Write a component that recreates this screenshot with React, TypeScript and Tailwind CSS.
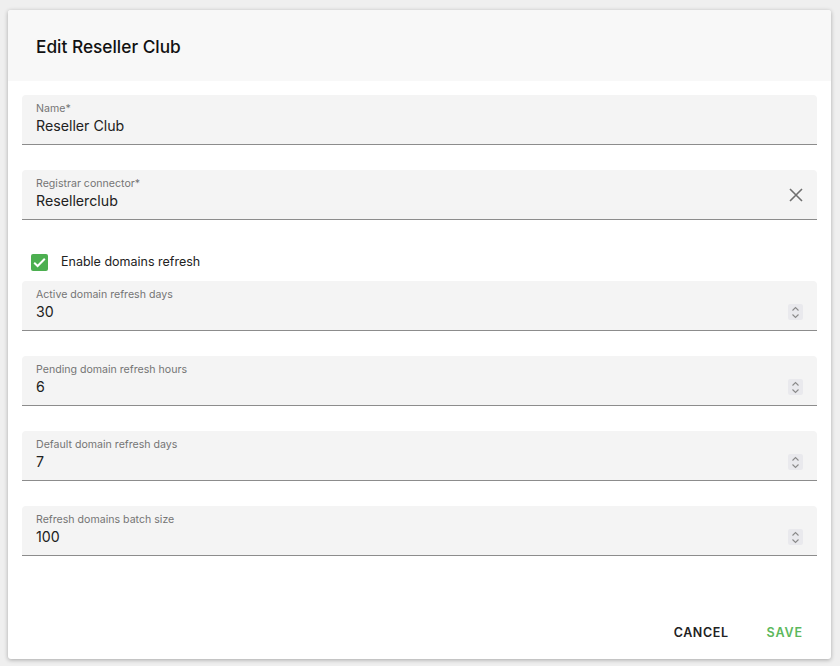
import React from "react";

const font = { fontFamily: "Inter, 'Noto Sans', sans-serif" };

function Spin() {
  return (
    <div className="flex h-[16px] w-[15px] items-center justify-center rounded-[2px] bg-[#e9e9ed]">
      <svg width="9" height="13" viewBox="0 0 9 13" fill="none" stroke="#8a8a8a" strokeWidth="1.1">
        <path d="M1.5 4.5 L4.5 1.5 L7.5 4.5" />
        <path d="M1.5 8.5 L4.5 11.5 L7.5 8.5" />
      </svg>
    </div>
  );
}

function Field({ label, value, spin, right }: { label: string; value: string; spin?: boolean; right?: React.ReactNode }) {
  return (
    <div className="flex h-[50px] items-center rounded-t-[4px] border-b border-[#8c8c8c] bg-[#f4f4f4] pl-[14px] pr-[14px]">
      <div className="flex flex-1 flex-col self-start pt-[7px]">
        <span className="text-[10.6px] leading-[14px] text-[#757575]">{label}</span>
        <div className="mt-[1px] flex items-center">
          <span className="flex-1 text-[14.2px] leading-[18px] text-[#212121]">{value}</span>
          {spin && <Spin />}
        </div>
      </div>
      {right}
    </div>
  );
}

export default function App() {
  return (
    <div className="h-[666px] w-[840px] bg-[#efefef] pl-[8px] pr-[9px] pt-[10px]" style={font}>
      <div className="flex h-[649px] flex-col overflow-hidden rounded-[3px] bg-white shadow-[0_1px_4px_rgba(0,0,0,0.3)]">
        <div className="flex h-[71px] items-center bg-[#f8f8f8] pl-[28px] pt-[2px]">
          <h1 className="text-[17.3px] font-medium text-[#111]">Edit Reseller Club</h1>
        </div>
        <div className="flex flex-col px-[14px] pt-[14px]">
          <Field label="Name*" value="Reseller Club" />
          <div className="h-[25px]" />
          <Field
            label="Registrar connector*"
            value="Resellerclub"
            right={
              <svg width="14" height="14" viewBox="0 0 14 14" stroke="#6f6f6f" strokeWidth="1.6">
                <path d="M1 1 L13 13 M13 1 L1 13" />
              </svg>
            }
          />
          <div className="flex h-[61px] items-center pl-[9px] pt-[24px]">
            <div className="flex h-[17px] w-[17px] items-center justify-center rounded-[2px] bg-[#4caf50]">
              <svg width="15" height="15" viewBox="0 0 15 15" fill="none" stroke="white" strokeWidth="2">
                <path d="M2.2 7.8 L5.6 11 L12.8 3.8" />
              </svg>
            </div>
            <span className="ml-[13px] text-[12.5px] text-[#222]">Enable domains refresh</span>
          </div>
          <div className="flex flex-col gap-[25px]">
            <Field label="Active domain refresh days" value="30" spin />
            <Field label="Pending domain refresh hours" value="6" spin />
            <Field label="Default domain refresh days" value="7" spin />
            <Field label="Refresh domains batch size" value="100" spin />
          </div>
        </div>
        <div className="mt-auto flex h-[52px] items-center justify-end gap-[38px] pr-[28px]">
          <button className="text-[12.5px] font-semibold tracking-[0.6px] text-[#222]">CANCEL</button>
          <button className="text-[12.5px] font-semibold tracking-[0.9px] text-[#5cb85c]">SAVE</button>
        </div>
      </div>
    </div>
  );
}
